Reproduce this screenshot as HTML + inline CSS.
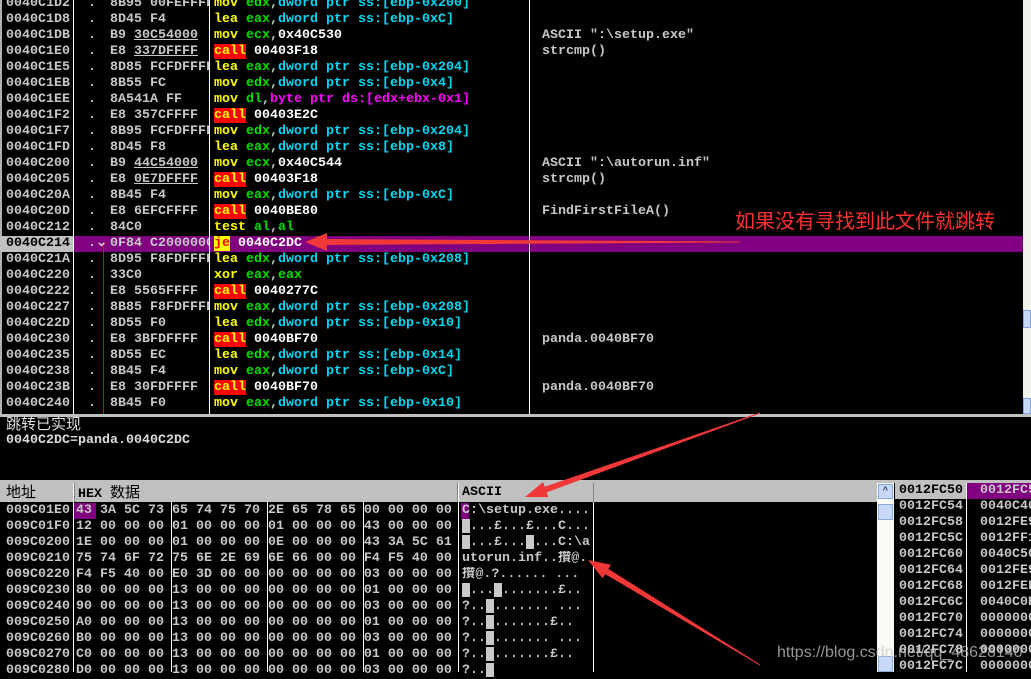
<!DOCTYPE html>
<html><head><meta charset="utf-8">
<style>
*{margin:0;padding:0;box-sizing:border-box}
body{width:1031px;height:672px;overflow:hidden;background:#000;position:relative;font-family:"Liberation Mono","Noto Sans CJK SC",monospace;font-weight:bold;font-size:13.33px;color:#c8c8c8}
.a{position:absolute;white-space:pre;line-height:16px;height:16px;overflow:hidden}
.vl{position:absolute;width:1px;background:#fff}
.y{color:#ffff00}.g{color:#00e000}.c{color:#00d8f0}.w{color:#fff}.m{color:#ff00ff}
.call{background:#ff0000;color:#ffff00}
.u{text-decoration:underline}
.cn{font-family:"Liberation Sans","Noto Sans CJK SC",sans-serif;font-weight:normal}
</style></head><body>
<!-- disasm pane -->
<div style="position:absolute;left:0;top:0;width:2px;height:414px;background:#b0b0b0"></div>
<div style="position:absolute;left:0;top:236px;width:1023px;height:16px;background:#800080"></div>
<div style="position:absolute;left:0;top:236px;width:73px;height:16px;background:#c0c0c0"></div>
<div class="vl" style="left:73px;top:0;height:414px"></div>
<div class="vl" style="left:209px;top:0;height:414px"></div>
<div class="vl" style="left:529px;top:0;height:414px"></div>
<div style="position:absolute;left:103px;top:244px;width:1px;height:170px;background:#e00000"></div>
<div style="position:absolute;left:103px;top:243px;width:4px;height:1px;background:#e00000"></div>
<div id="dis"></div>
<!-- scrollbar right -->
<div style="position:absolute;left:1023px;top:0;width:8px;height:414px;background:#f0f0ec"></div>
<div style="position:absolute;left:1023px;top:310px;width:8px;height:18px;background:#c8d8f8;border:1px solid #8aa8e0"></div>
<div style="position:absolute;left:1023px;top:398px;width:8px;height:16px;background:#c8d8f8;border:1px solid #8aa8e0"></div>
<!-- separator -->
<div style="position:absolute;left:0;top:414px;width:1031px;height:3px;background:#c0c0c0"></div>
<div class="a cn" style="left:6px;top:416px;font-size:15px;line-height:18px;height:18px;color:#ddd">跳转已实现</div>
<div class="a" style="left:6px;top:433px;color:#ddd">0040C2DC=panda.0040C2DC</div>
<div style="position:absolute;left:0;top:480px;width:1031px;height:3px;background:#c0c0c0"></div>
<!-- dump header -->
<div style="position:absolute;left:0;top:483px;width:877px;height:19px;background:#c0c0c0"></div>
<div style="position:absolute;left:73px;top:483px;width:1px;height:19px;background:#fff"></div>
<div style="position:absolute;left:74px;top:483px;width:1px;height:19px;background:#808080"></div>
<div style="position:absolute;left:457px;top:483px;width:1px;height:19px;background:#808080"></div>
<div style="position:absolute;left:458px;top:483px;width:1px;height:19px;background:#fff"></div>
<div style="position:absolute;left:593px;top:483px;width:1px;height:19px;background:#808080"></div>
<div class="a cn" style="left:6px;top:484px;font-size:15px;line-height:18px;height:18px;color:#000">地址</div>
<div class="a" style="left:78px;top:485px;color:#000">HEX <span class="cn" style="font-size:15px">数据</span></div>
<div class="a" style="left:462px;top:485px;color:#000">ASCII</div>
<div class="vl" style="left:73px;top:502px;height:170px"></div>
<div class="vl" style="left:171px;top:502px;height:170px"></div>
<div class="vl" style="left:267px;top:502px;height:170px"></div>
<div class="vl" style="left:363px;top:502px;height:170px"></div>
<div class="vl" style="left:458px;top:502px;height:170px"></div>
<div class="vl" style="left:593px;top:502px;height:170px"></div>
<div style="position:absolute;left:74px;top:503px;width:22px;height:16px;background:#800080"></div>
<div style="position:absolute;left:461px;top:503px;width:8px;height:16px;background:#800080"></div>
<div id="dump"></div>
<!-- scrollbar dump -->
<div style="position:absolute;left:877px;top:483px;width:17px;height:189px;background:#fafaf6"></div>
<div style="position:absolute;left:878px;top:484px;width:15px;height:15px;background:#c8d8f8;border:1px solid #8aa8e0;font-size:9px;color:#335;text-align:center;line-height:13px">^</div>
<div style="position:absolute;left:878px;top:504px;width:15px;height:16px;background:#c8d8f8;border:1px solid #8aa8e0"></div>
<div style="position:absolute;left:878px;top:656px;width:15px;height:16px;background:#c8d8f8;border:1px solid #8aa8e0"></div>
<!-- stack -->
<div style="position:absolute;left:895px;top:483px;width:71px;height:16px;background:#c0c0c0"></div>
<div style="position:absolute;left:967px;top:483px;width:64px;height:16px;background:#800080"></div>
<div class="vl" style="left:966px;top:483px;height:189px"></div>
<div id="stk"></div>
<!-- annotations -->
<div class="a cn" style="left:735px;top:208px;height:28px;line-height:28px;font-size:20px;color:#ff3030">如果没有寻找到此文件就跳转</div>
<div class="a" style="left:777px;top:643px;height:20px;line-height:20px;font-family:'Liberation Sans',sans-serif;font-weight:normal;font-size:16px;color:rgba(200,200,200,0.75)">https://blog.csdn.net/qq_48628140</div>
<svg style="position:absolute;left:0;top:0" width="1031" height="672">
<g fill="#f03838">
<polygon points="305,242 327,233 327,239 740,241.5 740,242.5 327,245 327,251"/>
<polygon points="525,497 543,482 544.7,486.8 759.8,412.5 760.2,413.5 546.7,492.4 548.4,497.1"/>
<polygon points="588,560 611,564.7 608.4,568.9 760.3,664.6 759.7,665.4 605.2,574.1 602.6,578.3"/>
</g>
</svg>
<script>
var D=[
["0040C1D2","8B95 00FEFFFF",'<span class="y">mov</span> <span class="g">edx</span>,<span class="c">dword ptr ss:[ebp-0x200]</span>',""],
["0040C1D8","8D45 F4",'<span class="y">lea</span> <span class="g">eax</span>,<span class="c">dword ptr ss:[ebp-0xC]</span>',""],
["0040C1DB",'B9 <span class="u">30C54000</span>','<span class="y">mov</span> <span class="g">ecx</span>,<span class="w">0x40C530</span>','ASCII ":\\setup.exe"'],
["0040C1E0",'E8 <span class="u">337DFFFF</span>','<span class="call">call</span> <span class="w">00403F18</span>',"strcmp()"],
["0040C1E5","8D85 FCFDFFFF",'<span class="y">lea</span> <span class="g">eax</span>,<span class="c">dword ptr ss:[ebp-0x204]</span>',""],
["0040C1EB","8B55 FC",'<span class="y">mov</span> <span class="g">edx</span>,<span class="c">dword ptr ss:[ebp-0x4]</span>',""],
["0040C1EE","8A541A FF",'<span class="y">mov</span> <span class="g">dl</span>,<span class="m">byte ptr ds:[edx+ebx-0x1]</span>',""],
["0040C1F2","E8 357CFFFF",'<span class="call">call</span> <span class="w">00403E2C</span>',""],
["0040C1F7","8B95 FCFDFFFF",'<span class="y">mov</span> <span class="g">edx</span>,<span class="c">dword ptr ss:[ebp-0x204]</span>',""],
["0040C1FD","8D45 F8",'<span class="y">lea</span> <span class="g">eax</span>,<span class="c">dword ptr ss:[ebp-0x8]</span>',""],
["0040C200",'B9 <span class="u">44C54000</span>','<span class="y">mov</span> <span class="g">ecx</span>,<span class="w">0x40C544</span>','ASCII ":\\autorun.inf"'],
["0040C205",'E8 <span class="u">0E7DFFFF</span>','<span class="call">call</span> <span class="w">00403F18</span>',"strcmp()"],
["0040C20A","8B45 F4",'<span class="y">mov</span> <span class="g">eax</span>,<span class="c">dword ptr ss:[ebp-0xC]</span>',""],
["0040C20D","E8 6EFCFFFF",'<span class="call">call</span> <span class="w">0040BE80</span>',"FindFirstFileA()"],
["0040C212","84C0",'<span class="y">test</span> <span class="g">al</span>,<span class="g">al</span>',""],
["0040C214","0F84 C2000000",'<span style="background:#ffff00;color:#ff0000">je</span> <span class="w">0040C2DC</span>',""],
["0040C21A","8D95 F8FDFFFF",'<span class="y">lea</span> <span class="g">edx</span>,<span class="c">dword ptr ss:[ebp-0x208]</span>',""],
["0040C220","33C0",'<span class="y">xor</span> <span class="g">eax</span>,<span class="g">eax</span>',""],
["0040C222","E8 5565FFFF",'<span class="call">call</span> <span class="w">0040277C</span>',""],
["0040C227","8B85 F8FDFFFF",'<span class="y">mov</span> <span class="g">eax</span>,<span class="c">dword ptr ss:[ebp-0x208]</span>',""],
["0040C22D","8D55 F0",'<span class="y">lea</span> <span class="g">edx</span>,<span class="c">dword ptr ss:[ebp-0x10]</span>',""],
["0040C230","E8 3BFDFFFF",'<span class="call">call</span> <span class="w">0040BF70</span>',"panda.0040BF70"],
["0040C235","8D55 EC",'<span class="y">lea</span> <span class="g">edx</span>,<span class="c">dword ptr ss:[ebp-0x14]</span>',""],
["0040C238","8B45 F4",'<span class="y">mov</span> <span class="g">eax</span>,<span class="c">dword ptr ss:[ebp-0xC]</span>',""],
["0040C23B","E8 30FDFFFF",'<span class="call">call</span> <span class="w">0040BF70</span>',"panda.0040BF70"],
["0040C240","8B45 F0",'<span class="y">mov</span> <span class="g">eax</span>,<span class="c">dword ptr ss:[ebp-0x10]</span>',""]];
var h="";
D.forEach(function(r,i){var t=-4+16*i;var je=i==15;
h+='<div class="a" style="left:6px;top:'+t+'px;width:66px;'+(je?'color:#000':'')+'">'+r[0]+'</div>';
h+='<div class="a" style="left:88px;top:'+t+'px">'+(je?'.&#8964;':'.')+'</div>';
h+='<div class="a" style="left:110px;top:'+t+'px;width:99px">'+r[1]+'</div>';
h+='<div class="a" style="left:214px;top:'+t+'px;width:314px">'+r[2]+'</div>';
if(r[3])h+='<div class="a" style="left:542px;top:'+t+'px">'+r[3].replace(/</g,"&lt;")+'</div>';});
document.getElementById("dis").innerHTML=h;
var M=[
["009C01E0","43 3A 5C 73 65 74 75 70 2E 65 78 65 00 00 00 00","C:\\setup.exe...."],
["009C01F0","12 00 00 00 01 00 00 00 01 00 00 00 43 00 00 00","█...£...£...C..."],
["009C0200","1E 00 00 00 01 00 00 00 0E 00 00 00 43 3A 5C 61","█...£...█...C:\\a"],
["009C0210","75 74 6F 72 75 6E 2E 69 6E 66 00 00 F4 F5 40 00","utorun.inf..攢@."],
["009C0220","F4 F5 40 00 E0 3D 00 00 00 00 00 00 03 00 00 00","攢@.?...... ..."],
["009C0230","80 00 00 00 13 00 00 00 00 00 00 00 01 00 00 00","█...█.......£.."],
["009C0240","90 00 00 00 13 00 00 00 00 00 00 00 03 00 00 00","?..█....... ..."],
["009C0250","A0 00 00 00 13 00 00 00 00 00 00 00 01 00 00 00","?..█.......£.."],
["009C0260","B0 00 00 00 13 00 00 00 00 00 00 00 03 00 00 00","?..█....... ..."],
["009C0270","C0 00 00 00 13 00 00 00 00 00 00 00 01 00 00 00","?..█.......£.."],
["009C0280","D0 00 00 00 13 00 00 00 00 00 00 00 03 00 00 00","?..█"]];
h="";
M.forEach(function(r,i){var t=503+16*i;
var hx=r[1].split(" ");var s="";for(var k=0;k<16;k++){s+=hx[k]+(k%4==3?" ":" ");}
h+='<div class="a" style="left:6px;top:'+t+'px">'+r[0]+'</div>';
h+='<div class="a" style="left:76px;top:'+t+'px;'+'">'+s+'</div>';
h+='<div class="a" style="left:462px;top:'+t+'px;width:130px">'+r[2]+'</div>';});
document.getElementById("dump").innerHTML=h;
var S=[["0012FC50","0012FC5"],["0012FC54","0040C40"],["0012FC58","0012FE9"],["0012FC5C","0012FF1"],["0012FC60","0040C50"],["0012FC64","0012FE9"],["0012FC68","0012FEF"],["0012FC6C","0040C0B"],["0012FC70","0000000"],["0012FC74","0000000"],["0012FC78","0000000"],["0012FC7C","0000000"]];
h="";
S.forEach(function(r,i){var t=483+16*i;
h+='<div class="a" style="left:899px;top:'+t+'px;'+(i==0?'color:#000':'')+'">'+r[0]+'</div>';
h+='<div class="a" style="left:980px;top:'+t+'px">'+r[1]+'</div>';});
document.getElementById("stk").innerHTML=h;
</script>
</body></html>
